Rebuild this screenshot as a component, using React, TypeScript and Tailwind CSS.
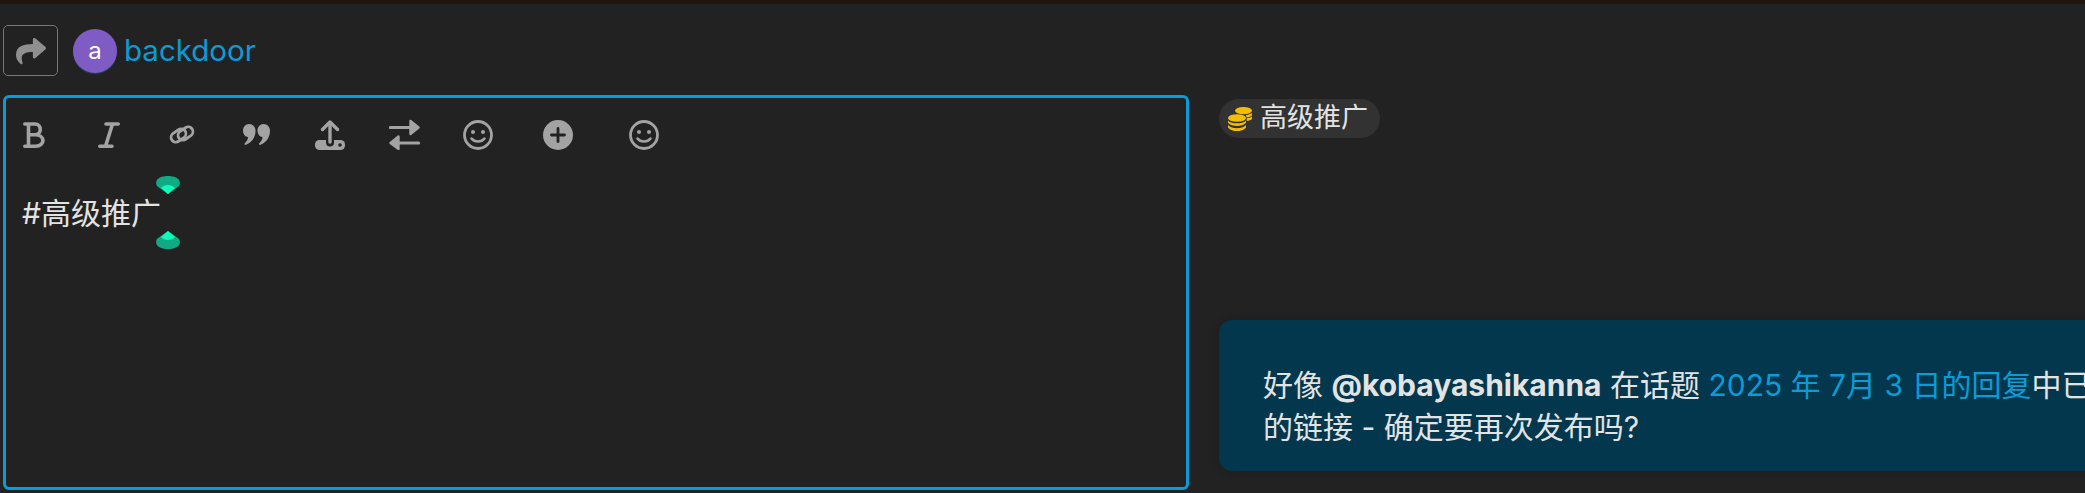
import React from "react";
import { FaShare } from "react-icons/fa";

const grey = "#a3a3a3";

function Handle({ flip }: { flip?: boolean }) {
  return (
    <svg width="24" height="18" viewBox="0 0 24 18" className={flip ? "block rotate-180" : "block"}>
      <path d="M12 18 L1.5 10.5 C-1 8 0 3 4 1.5 C9 -0.5 15 -0.5 20 1.5 C24 3 25 8 22.5 10.5 Z" fill="#10ab85" />
      <path d="M12 18 L5 12 C8 8 16 8 19 12 Z" fill="#0cfdb9" />
    </svg>
  );
}

function BoldIcon({ className }: { className?: string }) {
  return (
    <svg width="22" height="26" viewBox="0 0 22 26" fill="none" stroke={grey} strokeWidth="3.6" strokeLinecap="round" className={className}>
      <path d="M1.8 2 H12 C19 2 19 12.8 12 12.8 H5.5 M12 12.8 C22.5 12.8 22.5 24.2 12.5 24.2 H1.8 M5.5 2 V24.2" />
    </svg>
  );
}
function ItalicIcon({ className }: { className?: string }) {
  return (
    <svg width="22" height="26" viewBox="0 0 22 26" fill="none" stroke={grey} strokeWidth="3.6" strokeLinecap="round" className={className}>
      <path d="M8 2 H20.2 M1.8 24.2 H14 M14.5 2 L7.5 24.2" />
    </svg>
  );
}
function LinkIcon({ className }: { className?: string }) {
  return (
    <svg width="28" height="21" viewBox="0 0 28 21" fill="none" stroke={grey} strokeWidth="2.8" className={className + " overflow-visible"}>
      <rect x="2.5" y="6.75" width="16" height="9.5" rx="4.75" transform="rotate(-35 10.5 11.5)" />
      <rect x="9.5" y="4.75" width="16" height="9.5" rx="4.75" transform="rotate(-35 17.5 9.5)" />
    </svg>
  );
}
function QuoteIcon({ className }: { className?: string }) {
  const d = "M6 0 C10 0 12.5 3 12.5 7 C12.5 14 8 19 2.5 21 C1.5 21 1 20 2 19 C4 17 5 15 5 13 C2 13 0 10 0 6.5 C0 3 2.5 0 6 0Z";
  return (
    <svg width="27" height="21" viewBox="0 0 27 21" fill={grey} className={className}>
      <path d={d} />
      <path d={d} transform="translate(14.5 0)" />
    </svg>
  );
}
function UploadIcon({ className }: { className?: string }) {
  return (
    <svg width="30" height="30" viewBox="0 0 30 30" fill="none" className={className}>
      <rect x="0" y="20" width="30" height="10" rx="4.5" fill={grey} />
      <path d="M15 18 V22.5" stroke="#222222" strokeWidth="8" strokeLinecap="round" />
      <path d="M15 3 V22" stroke={grey} strokeWidth="3.4" strokeLinecap="round" />
      <path d="M7.5 9.5 L15 2 L22.5 9.5" stroke={grey} strokeWidth="3.4" strokeLinecap="round" strokeLinejoin="round" />
      <circle cx="25" cy="25" r="1.8" fill="#222222" />
    </svg>
  );
}
function ExchangeIcon({ className }: { className?: string }) {
  return (
    <svg width="31" height="31" viewBox="0 0 31 31" className={className}>
      <path d="M1.5 8.5 H24" stroke={grey} strokeWidth="3.2" strokeLinecap="round" fill="none" />
      <path d="M21.5 2 L29.5 8.5 L21.5 15 Z" fill={grey} stroke={grey} strokeWidth="2.4" strokeLinejoin="round" />
      <path d="M29.5 24 H7" stroke={grey} strokeWidth="3.2" strokeLinecap="round" fill="none" />
      <path d="M9.5 17.5 L1.5 24 L9.5 30 Z" fill={grey} stroke={grey} strokeWidth="2.4" strokeLinejoin="round" />
    </svg>
  );
}
function SmileIcon({ className }: { className?: string }) {
  return (
    <svg width="30" height="30" viewBox="0 0 30 30" fill="none" className={className}>
      <circle cx="15" cy="15" r="13.5" stroke={grey} strokeWidth="2.8" />
      <circle cx="10" cy="12" r="2" fill={grey} />
      <circle cx="20" cy="12" r="2" fill={grey} />
      <path d="M8.5 18.5 C11.5 22.5 18.5 22.5 21.5 18.5" stroke={grey} strokeWidth="2.6" strokeLinecap="round" />
    </svg>
  );
}
function PlusIcon({ className }: { className?: string }) {
  return (
    <svg width="30" height="30" viewBox="0 0 30 30" fill="none" className={className}>
      <circle cx="15" cy="15" r="15" fill={grey} />
      <path d="M15 8.5 V21.5 M8.5 15 H21.5" stroke="#222222" strokeWidth="2.8" strokeLinecap="round" />
    </svg>
  );
}
function CoinsIcon({ className }: { className?: string }) {
  const c = "#f5bd00";
  return (
    <svg width="24" height="24" viewBox="0 0 24 24" className={className}>
      <ellipse cx="15.5" cy="3.6" rx="8.5" ry="3.6" fill={c} />
      <path d="M18 8 C20.5 7.8 22.6 7 24 6 V8.5 C23 9.5 21 10.2 18.5 10.5 Z M18.5 11.5 C20.8 11.2 22.8 10.5 24 9.6 V12 C23 13 21 13.8 18.8 14 Z" fill={c} />
      <ellipse cx="9" cy="11" rx="9" ry="3.8" fill={c} />
      <path d="M0 13.4 C2 15.6 5.5 16.3 9 16.3 C12.5 16.3 16 15.6 18 13.4 V15.8 C16 18.2 12.5 19 9 19 C5.5 19 2 18.2 0 15.8 Z" fill={c} />
      <path d="M0 18 C2 20.4 5.5 21.2 9 21.2 C12.5 21.2 16 20.4 18 18 V20.4 C16 23 12.5 24 9 24 C5.5 24 2 23 0 20.4 Z" fill={c} />
    </svg>
  );
}

export default function App() {
  return (
    <div className="h-[493px] w-full overflow-hidden bg-[#222222] font-['Inter','Noto_Sans_CJK_SC',sans-serif] text-[#e3e3e3]">
      <div className="h-[4px] bg-[#20160d]" />
      <div className="ml-[3px] mt-[21px] flex h-[51px] items-center">
        <div className="flex h-[51px] w-[55px] items-center justify-center rounded-[5px] border border-[#777777]">
          <FaShare className="h-[30px] w-[30px] text-[#8f8f8f]" />
        </div>
        <div className="ml-[15px] flex h-[44px] w-[44px] items-center justify-center rounded-full bg-[#7f5bc4] text-[24px] text-white shadow-[0_1px_1px_#1f4a66]">
          a
        </div>
        <span className="ml-[7px] text-[29.5px] text-[#0b9bd7]">backdoor</span>
      </div>
      <div className="mt-[19px] flex items-start">
        <div className="relative ml-[3px] h-[395px] w-[1186px] shrink-0 rounded-[6px] border-[3px] border-[#0b9bd7] pl-[16px] pt-[21px]">
          <div className="flex h-[31px] items-center">
            <BoldIcon className="ml-[1px] shrink-0" />
            <ItalicIcon className="ml-[53px] shrink-0" />
            <LinkIcon className="ml-[48px] shrink-0" />
            <QuoteIcon className="ml-[47px] shrink-0" />
            <UploadIcon className="ml-[45px] shrink-0" />
            <ExchangeIcon className="ml-[44px] shrink-0" />
            <SmileIcon className="ml-[43px] shrink-0" />
            <PlusIcon className="ml-[50px] shrink-0" />
            <SmileIcon className="ml-[56px] shrink-0" />
          </div>
          <div className="mt-[45px] text-[30px] leading-[36px]">#高级推广</div>
          <div className="absolute left-[150px] top-[78px]"><Handle /></div>
          <div className="absolute left-[150px] top-[133px]"><Handle flip /></div>
        </div>
        <div className="ml-[30px] min-w-0 flex-1">
          <div className="mt-[4px] flex h-[39px] w-[161px] items-center rounded-[20px] bg-[#323232] pl-[9px]">
            <CoinsIcon className="shrink-0" />
            <span className="ml-[8px] whitespace-nowrap text-[27px]">高级推广</span>
          </div>
          <div className="mt-[182px] h-[151px] w-[900px] overflow-hidden rounded-[13px] bg-[#02374d] pl-[44px] pt-[44px] text-[30px] leading-[42px] shadow-[0_0_10px_rgba(0,0,0,0.2)]">
            <div className="whitespace-nowrap">
              好像 <b className="font-bold">@kobayashikanna</b> 在话题 <span className="text-[#0b9bd7]">2025 年 7月 3 日的回复</span>中已
            </div>
            <div className="whitespace-nowrap">的链接 - 确定要再次发布吗?</div>
          </div>
        </div>
      </div>
    </div>
  );
}
